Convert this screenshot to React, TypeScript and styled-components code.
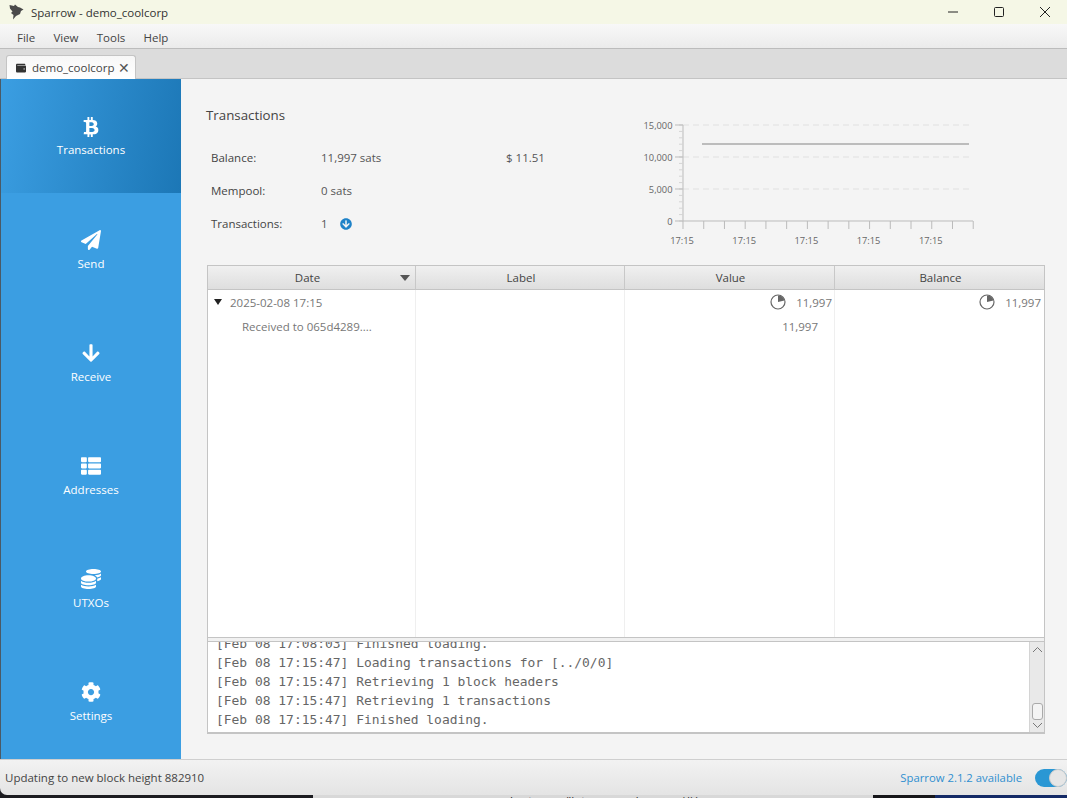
import styled, { createGlobalStyle } from "styled-components";
import {
  FaArrowCircleDown,
  FaArrowDown,
  FaBtc,
  FaCog,
  FaCoins,
  FaPaperPlane,
  FaThList,
  FaWallet,
} from "react-icons/fa";

const GlobalStyle = createGlobalStyle`
  html, body {
    margin: 0;
    padding: 0;
    background: #2a2a2e;
    overflow: hidden;
  }
  * {
    box-sizing: border-box;
  }
`;

const UI_FONT = `"Open Sans", "Noto Sans", sans-serif`;

const Window = styled.div`
  width: 1067px;
  height: 798px;
  display: flex;
  flex-direction: column;
  font-family: ${UI_FONT};
  font-size: 11.5px;
  color: #555;
  background: #1d1d22;
`;

const TitleBar = styled.div`
  height: 24px;
  flex: none;
  display: flex;
  align-items: center;
  background: #f5f7e6;
  color: #333;
  padding-left: 9px;
  font-size: 11.5px;
`;

const AppTitle = styled.span`
  margin-left: 6px;
  flex: 1;
`;

const WinButton = styled.div`
  width: 46px;
  height: 20px;
  display: flex;
  align-items: center;
  justify-content: center;
  &:last-child {
    margin-right: -1px;
  }
`;

const MenuBar = styled.div`
  height: 25px;
  flex: none;
  display: flex;
  align-items: center;
  gap: 18.2px;
  padding: 2px 0 0 17px;
  background: linear-gradient(#f8f8f8, #ebebeb);
  border-bottom: 1px solid #bcbcbc;
  color: #444;
`;

const TabBar = styled.div`
  height: 30px;
  flex: none;
  display: flex;
  align-items: flex-end;
  padding-left: 6px;
  background: #dcdcdc;
  border-bottom: 1px solid #c4c4c4;
`;

const Tab = styled.div`
  width: 130px;
  height: 24px;
  margin-bottom: -1px;
  display: flex;
  align-items: center;
  gap: 6px;
  padding-left: 9px;
  background: linear-gradient(#f7f7f7, #ffffff);
  border: 1px solid #c4c4c4;
  border-bottom: none;
  border-radius: 3px 3px 0 0;
  color: #444;
  svg {
    color: #333;
    flex: none;
  }
`;

const TabClose = styled.span`
  font-size: 14px;
  line-height: 14px;
  margin-left: -3px;
  color: #555;
`;

const Body = styled.div`
  flex: 1;
  min-height: 0;
  display: flex;
  background: #f4f4f4;
`;

const Sidebar = styled.nav`
  width: 181px;
  flex: none;
  display: grid;
  grid-template-rows: 114px repeat(5, 113px) 1fr;
  background: #3b9ee2;
  border-left: 1px solid #4a5a66;
`;

const NavItem = styled.div<{ $active?: boolean }>`
  display: flex;
  flex-direction: column;
  align-items: center;
  padding-top: ${(p) => (p.$active ? 38 : 37)}px;
  color: #fff;
  font-size: 11.5px;
  background: ${(p) =>
    p.$active ? "linear-gradient(100deg, #3b9ee2, #1c77b6)" : "transparent"};
  svg {
    height: 20px;
    width: 20px;
    margin-bottom: ${(p) => (p.$active ? 5 : 6)}px;
  }
`;

const Main = styled.main`
  flex: 1;
  min-width: 0;
  display: flex;
  flex-direction: column;
  padding: 27px 22px 25px 26px;
`;

const Summary = styled.section`
  height: 159px;
  flex: none;
  display: flex;
  justify-content: space-between;
`;

const SummaryLeft = styled.div`
  display: flex;
  flex-direction: column;
`;

const Heading = styled.h2`
  margin: 0 0 17px -1px;
  height: 18px;
  line-height: 18px;
  font-size: 13.3px;
  font-weight: 400;
  color: #444;
`;

const FormRow = styled.div`
  height: 33px;
  display: flex;
  align-items: center;
  padding-left: 4px;
`;

const FormLabel = styled.span`
  width: 110px;
  color: #444;
`;

const FormValue = styled.span`
  width: 185px;
  display: flex;
  align-items: center;
  gap: 12px;
  svg {
    color: #1e82c8;
  }
`;

const Chart = styled.svg`
  flex: none;
  margin: 14px 60px 0 0;
  font-family: ${UI_FONT};
`;

const TableWrap = styled.section`
  flex: 1;
  min-height: 0;
  display: flex;
  flex-direction: column;
  border: 1px solid #c4c4c4;
  border-bottom: none;
  background: #fff;
`;

const Columns = styled.div`
  display: grid;
  grid-template-columns: 208px 209px 210px 1fr;
`;

const HeaderCell = styled.div<{ $sorted?: boolean }>`
  height: 24px;
  position: relative;
  display: flex;
  align-items: center;
  justify-content: center;
  padding: ${(p) => (p.$sorted ? "0 8px 0 0" : "0 0 0 2px")};
  background: linear-gradient(#f0f0f0, #dedede);
  border-right: 1px solid #c8c8c8;
  border-bottom: 1px solid #c4c4c4;
  color: #444;
  &:last-child {
    border-right: none;
  }
`;

const SortArrow = styled.span`
  position: absolute;
  right: 5px;
  top: 9px;
  width: 0;
  height: 0;
  border-left: 5px solid transparent;
  border-right: 5px solid transparent;
  border-top: 6px solid #555;
`;

const TableBody = styled(Columns)`
  flex: 1;
  min-height: 0;
`;

const Col = styled.div`
  border-right: 1px solid #efefef;
  &:last-child {
    border-right: none;
  }
`;

const Cell = styled.div<{ $right?: number; $indent?: number }>`
  height: 24.5px;
  display: flex;
  align-items: center;
  justify-content: ${(p) => (p.$right !== undefined ? "flex-end" : "flex-start")};
  gap: 10px;
  padding-right: ${(p) => p.$right ?? 0}px;
  padding-left: ${(p) => p.$indent ?? 0}px;
  color: #777;
`;

const TreeArrow = styled.span`
  width: 0;
  height: 0;
  margin-right: -2px;
  border-left: 4.5px solid transparent;
  border-right: 4.5px solid transparent;
  border-top: 6px solid #222;
`;

const Divider = styled.div`
  height: 5px;
  flex: none;
  background: #f1f1f1;
  border: 1px solid #c4c4c4;
`;

const LogPane = styled.section`
  height: 92px;
  flex: none;
  display: flex;
  background: #fff;
  border: 1px solid #c4c4c4;
  border-top: none;
  border-bottom-width: 2px;
`;

const LogText = styled.div`
  flex: 1;
  min-width: 0;
  overflow: hidden;
  display: flex;
  flex-direction: column;
  justify-content: flex-end;
  padding: 0 0 3px 8px;
  font-family: "DejaVu Sans Mono", "Liberation Mono", monospace;
  font-size: 12.95px;
  line-height: 19px;
  color: #666;
  white-space: pre;
`;

const ScrollBar = styled.div`
  width: 15px;
  flex: none;
  display: flex;
  flex-direction: column;
  align-items: center;
  justify-content: space-between;
  padding: 4px 0 3px;
  background: #e9e9e9;
  border-left: 1px solid #d4d4d4;
`;

const ScrollThumb = styled.div`
  width: 11px;
  height: 17px;
  margin-top: auto;
  margin-bottom: 2px;
  background: #f4f4f4;
  border: 1px solid #aaa;
  border-radius: 3px;
`;

const StatusBar = styled.footer`
  height: 36px;
  flex: none;
  display: flex;
  align-items: center;
  padding: 0 0 0 5px;
  background: linear-gradient(#f2f2f2, #e4e4e4);
  border-top: 1px solid #cfcfcf;
  border-radius: 0 0 0 7px;
  color: #444;
`;

const StatusText = styled.span`
  flex: 1;
`;

const UpdateLink = styled.span`
  color: #2f8fd0;
  margin-right: 13px;
  font-size: 11.3px;
`;

const Toggle = styled.div`
  width: 32px;
  height: 18px;
  flex: none;
  border-radius: 9px;
  background: #2a97d4;
  display: flex;
  justify-content: flex-end;
`;

const ToggleKnob = styled.div`
  width: 18px;
  height: 18px;
  border-radius: 50%;
  background: #e6e6e6;
  border: 1px solid #ccc;
`;

const Desktop = styled.div`
  height: 3px;
  flex: none;
  display: flex;
  overflow: hidden;
`;

const DesktopPart = styled.div<{ $color: string; $width: number }>`
  width: ${(p) => p.$width}px;
  flex: none;
  background: ${(p) => p.$color};
`;

const DesktopEditor = styled(DesktopPart)`
  padding-left: 197px;
  color: #222;
  font-size: 11px;
  line-height: 11px;
  white-space: pre;
`;

const navItems = [
  { label: "Transactions", icon: <FaBtc />, active: true },
  { label: "Send", icon: <FaPaperPlane /> },
  { label: "Receive", icon: <FaArrowDown /> },
  { label: "Addresses", icon: <FaThList /> },
  { label: "UTXOs", icon: <FaCoins /> },
  { label: "Settings", icon: <FaCog /> },
];

const logLines = [
  "[Feb 08 17:08:03] Finished loading.",
  "[Feb 08 17:15:47] Loading transactions for [../0/0]",
  "[Feb 08 17:15:47] Retrieving 1 block headers",
  "[Feb 08 17:15:47] Retrieving 1 transactions",
  "[Feb 08 17:15:47] Finished loading.",
];

function SparrowLogo() {
  return (
    <svg width="16" height="16" viewBox="0 0 16 16">
      <path
        d="M0.5 1 L5 2 L6 0.5 L9 3 L11 3.5 L14.5 5.5 L12 7 L11 10 L7 12 L4 15.5 L4.5 11 L2 9 L3.5 7.5 L1 4.5 Z"
        fill="#4a4a4a"
      />
    </svg>
  );
}

function PieIcon() {
  return (
    <svg width="16" height="16" viewBox="0 0 16 16">
      <circle cx="8" cy="8" r="7" fill="none" stroke="#666" strokeWidth="1.2" />
      <path d="M8 8 V1.4 A6.6 6.6 0 0 1 14.4 6.4 Z" fill="#666" />
    </svg>
  );
}

function BalanceChart() {
  const axisX = 63;
  const axisY = 101;
  const ticksX = Array.from({ length: 15 }, (_, i) => axisX + i * 20.73);
  const minorY = Array.from({ length: 16 }, (_, i) => 5 + i * 6.4);
  const majors = [
    { y: 5, text: "15,000" },
    { y: 37, text: "10,000" },
    { y: 69, text: "5,000" },
    { y: 101, text: "0" },
  ];
  return (
    <Chart width="365" height="136" viewBox="0 0 365 136">
      {majors.slice(0, 3).map((m) => (
        <line key={m.y} x1={axisX} x2="353" y1={m.y} y2={m.y} stroke="#e0e0e0" strokeDasharray="6 4" />
      ))}
      <line x1={axisX} x2={axisX} y1="5" y2={axisY} stroke="#bbb" />
      <line x1={axisX} x2="353" y1={axisY} y2={axisY} stroke="#bbb" />
      {minorY.map((y) => (
        <line key={y} x1={axisX - 4} x2={axisX} y1={y} y2={y} stroke="#d4d4d4" />
      ))}
      {majors.map((m) => (
        <g key={m.text}>
          <line x1={axisX - 8} x2={axisX} y1={m.y} y2={m.y} stroke="#bbb" />
          <text x={axisX - 10.5} y={m.y + 3.5} textAnchor="end" fontSize="9.3" fill="#666">
            {m.text}
          </text>
        </g>
      ))}
      {ticksX.map((x) => (
        <line key={x} x1={x} x2={x} y1={axisY} y2={axisY + 8} stroke="#bbb" />
      ))}
      {[0, 3, 6, 9, 12].map((i) => (
        <text key={i} x={ticksX[i] - 1} y={axisY + 23} textAnchor="middle" fontSize="9.3" fill="#666">
          17:15
        </text>
      ))}
      <line x1="82" x2="349" y1="24" y2="24" stroke="#aaa" strokeWidth="1.5" />
    </Chart>
  );
}

export default function App() {
  return (
    <Window>
      <GlobalStyle />
      <TitleBar>
        <SparrowLogo />
        <AppTitle>Sparrow - demo_coolcorp</AppTitle>
        <WinButton>
          <svg width="12" height="12" viewBox="0 0 12 12">
            <line x1="1" x2="11" y1="6" y2="6" stroke="#222" />
          </svg>
        </WinButton>
        <WinButton>
          <svg width="12" height="12" viewBox="0 0 12 12">
            <rect x="1.5" y="1.5" width="9" height="9" rx="1" fill="none" stroke="#222" />
          </svg>
        </WinButton>
        <WinButton>
          <svg width="12" height="12" viewBox="0 0 12 12">
            <path d="M1 1 L11 11 M11 1 L1 11" stroke="#222" />
          </svg>
        </WinButton>
      </TitleBar>
      <MenuBar>
        <span>File</span>
        <span>View</span>
        <span>Tools</span>
        <span>Help</span>
      </MenuBar>
      <TabBar>
        <Tab>
          <FaWallet size={10} />
          demo_coolcorp
          <TabClose>✕</TabClose>
        </Tab>
      </TabBar>
      <Body>
        <Sidebar>
          {navItems.map((item) => (
            <NavItem key={item.label} $active={item.active}>
              {item.icon}
              {item.label}
            </NavItem>
          ))}
        </Sidebar>
        <Main>
          <Summary>
            <SummaryLeft>
              <Heading>Transactions</Heading>
              <FormRow>
                <FormLabel>Balance:</FormLabel>
                <FormValue>11,997 sats</FormValue>
                <span>$ 11.51</span>
              </FormRow>
              <FormRow>
                <FormLabel>Mempool:</FormLabel>
                <FormValue>0 sats</FormValue>
              </FormRow>
              <FormRow>
                <FormLabel>Transactions:</FormLabel>
                <FormValue>
                  1
                  <FaArrowCircleDown size={12} />
                </FormValue>
              </FormRow>
            </SummaryLeft>
            <BalanceChart />
          </Summary>
          <TableWrap>
            <Columns>
              <HeaderCell $sorted>
                Date
                <SortArrow />
              </HeaderCell>
              <HeaderCell>Label</HeaderCell>
              <HeaderCell>Value</HeaderCell>
              <HeaderCell>Balance</HeaderCell>
            </Columns>
            <TableBody>
              <Col>
                <Cell $indent={6}>
                  <TreeArrow />
                  2025-02-08 17:15
                </Cell>
                <Cell $indent={34}>Received to 065d4289....</Cell>
              </Col>
              <Col />
              <Col>
                <Cell $right={2}>
                  <PieIcon />
                  11,997
                </Cell>
                <Cell $right={16}>11,997</Cell>
              </Col>
              <Col>
                <Cell $right={3}>
                  <PieIcon />
                  11,997
                </Cell>
              </Col>
            </TableBody>
          </TableWrap>
          <Divider />
          <LogPane>
            <LogText>
              {logLines.map((line, i) => (
                <div key={i}>{line}</div>
              ))}
            </LogText>
            <ScrollBar>
              <svg width="11" height="7" viewBox="0 0 11 7">
                <path d="M1 6 L5.5 1.5 L10 6" fill="none" stroke="#777" />
              </svg>
              <ScrollThumb />
              <svg width="11" height="7" viewBox="0 0 11 7">
                <path d="M1 1 L5.5 5.5 L10 1" fill="none" stroke="#777" />
              </svg>
            </ScrollBar>
          </LogPane>
        </Main>
      </Body>
      <StatusBar>
        <StatusText>Updating to new block height 882910</StatusText>
        <UpdateLink>Sparrow 2.1.2 available</UpdateLink>
        <Toggle>
          <ToggleKnob />
        </Toggle>
      </StatusBar>
      <Desktop>
        <DesktopPart $color="#1c1c20" $width={313} />
        <DesktopEditor $color="#d8d8d8" $width={560}>
          Logtegues ()\storage coolcorp proj/(:)
        </DesktopEditor>
        <DesktopPart $color="#16161a" $width={62} />
        <DesktopPart $color="#142a66" $width={132} />
      </Desktop>
    </Window>
  );
}
